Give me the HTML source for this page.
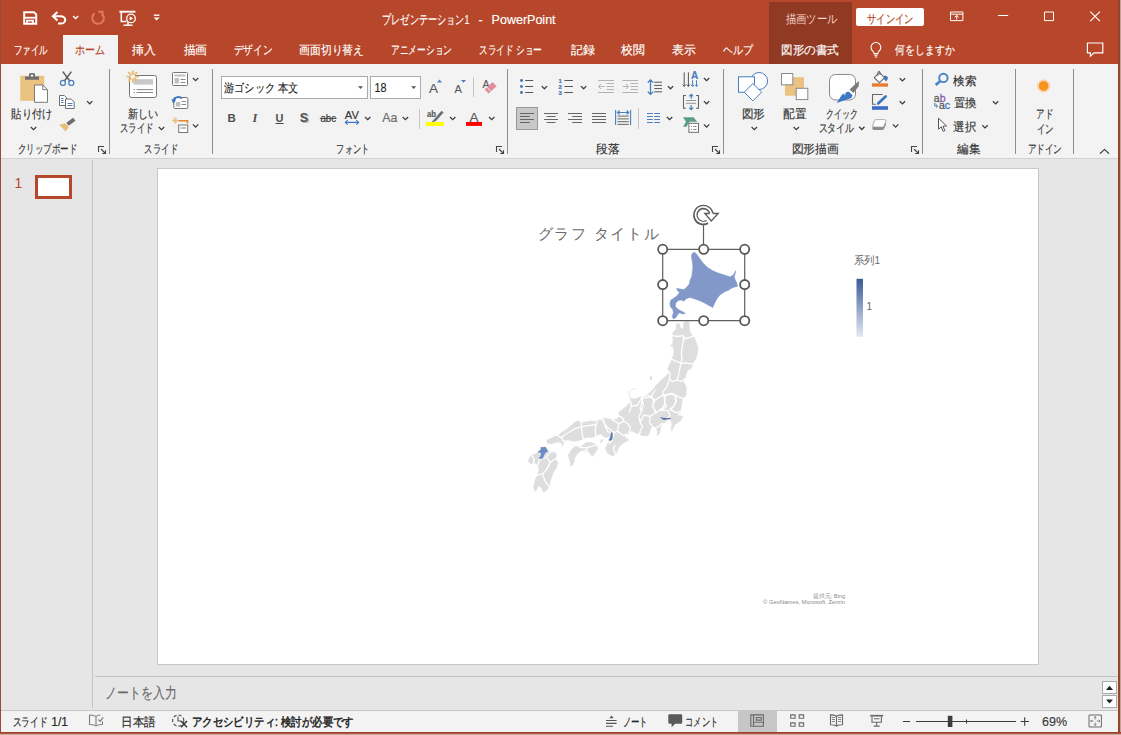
<!DOCTYPE html>
<html lang="ja">
<head>
<meta charset="utf-8">
<title>プレゼンテーション1 - PowerPoint</title>
<style>
html,body{margin:0;padding:0}
body{width:1121px;height:735px;overflow:hidden;position:relative;background:#e6e6e6;font-family:"Liberation Sans",sans-serif;font-size:12px;color:#444}
.a{position:absolute}
#top{left:0;top:0;width:1121px;height:64px;background:#b7472a}
#ctx{left:769px;top:2px;width:83px;height:62px;background:#913a23}
#hometab{left:63px;top:35px;width:55px;height:29px;background:#f3f3f3}
#signin{left:856px;top:8px;width:68px;height:18px;background:#fff;border-radius:2px}
#ribbon{left:0;top:64px;width:1121px;height:94px;background:#f3f3f3;border-bottom:1px solid #d2d2d2}
#leftdiv{left:92px;top:160px;width:1px;height:548px;background:#c3c3c3}
#slide{left:157px;top:168px;width:882px;height:497px;background:#fff;border:1px solid #c8c8c8;box-sizing:border-box}
#notesline{left:95px;top:676px;width:1023px;height:1px;background:#c3c3c3}
#status{left:0;top:710px;width:1121px;height:22px;background:#f3f3f3;border-top:1px solid #c6c6c6;box-sizing:border-box}
#viewsel{left:738px;top:711px;width:39px;height:21px;background:#c6c6c6}
#bl{left:0;top:0;width:1px;height:735px;background:#9a4a38}
#br{left:1118px;top:0;width:2px;height:735px;background:#96432f;border-right:1px solid #c4a39b}
#bb{left:0;top:732px;width:1121px;height:1px;background:#96432f;border-bottom:1px solid #b5553d}
#bb2{left:0;top:734px;width:1121px;height:1px;background:#c9a9a1}
.box{background:#fff;border:1px solid #ababab;box-sizing:border-box}
svg text{font-family:"Liberation Sans",sans-serif;font-size:12px;color:#333;fill:currentColor;stroke:currentColor;stroke-width:.16px}
svg .w{color:#fff;stroke-width:.16px}
svg .o{color:#b7472a;stroke-width:.2px}
svg .k{color:#1e1e1e;stroke-width:.15px}
</style>
</head>
<body>
<div class="a" id="top"></div>
<div class="a" id="ctx"></div>
<div class="a" id="hometab"></div>
<div class="a" id="signin"></div>
<div class="a" id="ribbon"></div>
<div class="a" id="leftdiv"></div>
<div class="a" id="slide"></div>
<div class="a" id="notesline"></div>
<div class="a" id="status"></div>
<div class="a" id="viewsel"></div>
<div class="a box" style="left:221px;top:76px;width:147px;height:23px"></div>
<div class="a box" style="left:370px;top:76px;width:51px;height:23px"></div>
<div class="a" style="left:516px;top:107px;width:22px;height:23px;background:#c8c8c8;border:1px solid #9a9a9a;box-sizing:border-box"></div>
<div class="a box" style="left:1102px;top:681px;width:15px;height:13px;border-color:#ababab"></div>
<div class="a box" style="left:1102px;top:695px;width:15px;height:13px;border-color:#ababab"></div>
<svg class="a" id="ov" width="1121" height="735" viewBox="0 0 1121 735" style="left:0;top:0">
<!-- ===== title bar ===== -->
<g id="qat" fill="none" stroke="#fff" stroke-width="1.400">
<path d="M24.200 12.200h9.800l2.200 2.200v9.400h-12z" stroke-width="2"/><path d="M24.500 17.700h11.400" stroke-width="1.800"/><path d="M27 24v-3.400h6V24" stroke-width="1.700"/>
<path d="M57.400 12l-4.500 4.300 4.500 4.300M53.400 16.300h7.400a4.400 3.600 0 0 1 0 7.200h-2.800" stroke-width="2.100"/>
<path d="M73 16l2.600 2.500 2.600-2.500" stroke-width="1.300"/>
<path d="M94.600 13.400a5.800 5.800 0 1 0 7.200.2M98.300 11.800h4.200v4.400" stroke="#e07a5f" stroke-width="2"/>
<path d="M119.400 11.700h16" stroke-width="1.900"/><path d="M121.300 12v9.600h5.200M128 22v3M123.500 25.300h9" stroke-width="1.500"/>
<circle cx="131" cy="18.400" r="4.300" fill="#b7472a" stroke-width="1.300"/><path d="M129.600 16.200v4.400l3.600-2.200z" fill="#fff" stroke="none"/>
<path d="M153.800 15.200h5.600" stroke-width="1.400"/><path d="M153.600 17.400h6l-3 3.200z" fill="#fff" stroke="none"/>
</g>
<text class="w" x="382" y="24" textLength="87.5" lengthAdjust="spacingAndGlyphs" style="font-size:12.5px">プレゼンテーション1</text>
<text class="w" x="478.6" y="24" style="font-size:12.5px">-</text>
<text class="w" x="491.6" y="24" textLength="64" lengthAdjust="spacingAndGlyphs" style="font-size:12.5px">PowerPoint</text>
<text class="w" x="785.8" y="22.800" textLength="51.6" lengthAdjust="spacingAndGlyphs" style="color:#f6d6cc;stroke-width:0">描画ツール</text>
<text class="o" x="867" y="22.6" textLength="46.4" lengthAdjust="spacingAndGlyphs">サインイン</text>
<g fill="none" stroke="#fff" stroke-width="1">
<path d="M950.5 12h12.4v8.6h-12.4zM950.5 14.2h12.4"/><path d="M956.7 19.4v-3.8M954.7 17.3l2-1.9 2 1.9"/>
<path d="M998 15.5h10.2"/>
<path d="M1044.5 12h9v8.6h-9z"/>
<path d="M1090.3 11.6l9.6 9.6M1099.9 11.6l-9.6 9.6" stroke-width="1.1"/>
<path d="M873 51.3a4.9 4.9 0 1 1 5.8 0c-.7.6-1 1.2-1 2.3h-3.8c0-1.100-.3-1.700-1-2.300zM874.200 55.300h3.400M874.600 57h2.600" stroke-width="1.1"/>
<path d="M1087.400 43h15.400v9.800h-8.800l-3.600 3.400v-3.400h-3z" stroke-width="1.2"/>
</g>
<!-- ===== tabs ===== -->
<g>
<text class="w" x="13.6" y="54.2" textLength="34" lengthAdjust="spacingAndGlyphs">ファイル</text>
<text class="o" x="74.6" y="54.2" textLength="30" lengthAdjust="spacingAndGlyphs">ホーム</text>
<text class="w" x="132.400" y="54.2" textLength="23.6" lengthAdjust="spacingAndGlyphs">挿入</text>
<text class="w" x="183.600" y="54.2" textLength="23.6" lengthAdjust="spacingAndGlyphs">描画</text>
<text class="w" x="233.800" y="54.2" textLength="38.6" lengthAdjust="spacingAndGlyphs">デザイン</text>
<text class="w" x="299" y="54.2" textLength="65" lengthAdjust="spacingAndGlyphs">画面切り替え</text>
<text class="w" x="391" y="54.2" textLength="61" lengthAdjust="spacingAndGlyphs">アニメーション</text>
<text class="w" x="479" y="54.2" textLength="63" lengthAdjust="spacingAndGlyphs">スライド ショー</text>
<text class="w" x="570.5" y="54.2" textLength="24" lengthAdjust="spacingAndGlyphs">記録</text>
<text class="w" x="621" y="54.2" textLength="23.6" lengthAdjust="spacingAndGlyphs">校閲</text>
<text class="w" x="672" y="54.2" textLength="23.6" lengthAdjust="spacingAndGlyphs">表示</text>
<text class="w" x="723" y="54.2" textLength="30" lengthAdjust="spacingAndGlyphs">ヘルプ</text>
<text class="w" x="781" y="54.2" textLength="58" lengthAdjust="spacingAndGlyphs">図形の書式</text>
<text class="w" x="895.4" y="54.2" textLength="59" lengthAdjust="spacingAndGlyphs">何をしますか</text>
</g>
<defs>
<path id="chev" d="M-2.7-1.4L0 1.3 2.7-1.400" fill="none" stroke="#3c3c3c" stroke-width="1.25"/>
<g id="dl" fill="none" stroke="#444" stroke-width="1.100"><path d="M.5 6V.5H6M3 3l4.500 4.500M7.500 4.200v3.300H4.200"/></g>
</defs>
<!-- group separators -->
<g stroke="#8f8f8f" stroke-width="1"><path d="M109.5 69v85M212.500 69v85M507.500 69v85M723.500 69v85M922.500 69v85M1015.500 69v85M1073.500 69v85"/></g>
<g stroke="#c6c6c6" stroke-width="1"><path d="M473.500 77v20M419.500 109v20M638.500 108v21"/></g>
<!-- ===== clipboard ===== -->
<rect x="20.200" y="75.800" width="24" height="25" fill="#eac282"/>
<path d="M25 79.800v-3.200h4v-2a1.500 1.500 0 0 1 1.500-1.500h3a1.500 1.500 0 0 1 1.500 1.500v2h4v3.200z" fill="#6e6e6e"/><rect x="30.800" y="74.600" width="2.400" height="2" fill="#f3f3f3"/>
<path d="M34.500 85h8.300l4.700 4.700v12.600h-13z" fill="#fff" stroke="#7a7a7a" stroke-width="1"/><path d="M42.800 85v4.700h4.700" fill="none" stroke="#7a7a7a"/>
<text x="11.400" y="117.600" textLength="41.200" lengthAdjust="spacingAndGlyphs">貼り付け</text>
<use href="#chev" x="33.500" y="128.400"/>
<g fill="none" stroke="#5c5c5c" stroke-width="1.500"><path d="M62.800 71.600l7.200 9.600M71.400 71.600l-7.200 9.600"/></g>
<g fill="#f3f3f3" stroke="#4a7ebf" stroke-width="1.300"><circle cx="62.900" cy="82.900" r="2.500"/><circle cx="71.300" cy="82.900" r="2.500"/></g>
<g fill="#fff" stroke="#6e6e6e" stroke-width="1"><path d="M59.500 95.500h4.800l2.500 2.500v7.500h-7.300z"/><path d="M65.500 99h5.700l3 3v6.500h-8.700z"/></g>
<g stroke="#4a7ebf" stroke-width="1"><path d="M61 98.500h2.500M61 100.500h2.500M61 102.500h2.500M67.500 103.500h5M67.500 105.500h5"/></g>
<use href="#chev" x="89.700" y="102.500"/>
<path d="M66.300 122.800l6.800-5 2.400 3-6.800 5z" fill="#6e6e6e"/><path d="M65.600 123.200l3.200 4-3.200 4.400-6.400-6.800z" fill="#e8be76"/>
<text x="18" y="153" textLength="59" lengthAdjust="spacingAndGlyphs">クリップボード</text>
<use href="#dl" x="98" y="146"/>
<!-- ===== slides ===== -->
<rect x="129.500" y="75.500" width="27" height="22" rx="2" fill="#fff" stroke="#767676"/>
<rect x="133.600" y="79.200" width="19.400" height="5.400" fill="#c8c8c8"/>
<g stroke="#8a8a8a" stroke-width="1"><path d="M133.500 89.600h1.500M136.500 89.600h16.500M133.500 92.500h1.500M136.500 92.500h16.500"/></g>
<g stroke="#e8be76" stroke-width="1.900"><path d="M132.800 70.400v12.400M126.600 76.600h12.400M128.400 72.200l8.800 8.800M137.200 72.200l-8.800 8.800"/></g><circle cx="132.800" cy="76.600" r="2.200" fill="#f3f3f3"/>
<text x="128.200" y="117.600" textLength="30.400" lengthAdjust="spacingAndGlyphs">新しい</text>
<text x="119.800" y="132.400" textLength="34" lengthAdjust="spacingAndGlyphs">スライド</text>
<use href="#chev" x="161.500" y="128.400"/>
<rect x="172.500" y="72.500" width="15" height="13" rx="1" fill="#fff" stroke="#767676"/>
<rect x="174.500" y="74.500" width="11" height="2" fill="#c0c0c0"/><rect x="174.500" y="78" width="4.500" height="5.500" fill="#c0c0c0"/>
<g stroke="#8a8a8a"><path d="M180.500 79.500h5M180.500 82.500h5"/></g>
<use href="#chev" x="195.600" y="79.400"/>
<rect x="173.800" y="97.500" width="14" height="11" rx="1" fill="#fff" stroke="#767676"/>
<rect x="175.800" y="102" width="4.500" height="4.500" fill="#c0c0c0"/><g stroke="#8a8a8a"><path d="M181.500 101.500h4.500M181.500 104.500h4.500"/></g>
<path d="M173.500 102.500a5 5 0 0 1 8.500-4" fill="none" stroke="#3e78c2" stroke-width="1.800"/><path d="M171.200 99.500l5 0-2.600 4z" fill="#3e78c2"/>
<g stroke="#e8be76" stroke-width="1"><path d="M175.300 117.300v6.400M172.100 120.500h6.400M173 118.200l4.600 4.600M177.600 118.200l-4.600 4.600"/></g>
<path d="M178.500 120.800h9v2.800" fill="none" stroke="#e08a2e" stroke-width="1.600"/>
<rect x="178.700" y="125" width="9" height="7.500" fill="#fff" stroke="#767676"/><rect x="180.500" y="127" width="5.500" height="2" fill="#c0c0c0"/>
<use href="#chev" x="195.600" y="125.800"/>
<text x="144.400" y="153" textLength="33.600" lengthAdjust="spacingAndGlyphs">スライド</text>
<!-- ===== font ===== -->
<text class="k" x="224" y="92" textLength="74" lengthAdjust="spacingAndGlyphs">游ゴシック 本文</text>
<path d="M358 86.200h5l-2.500 2.800z" fill="#555"/>
<text class="k" x="374.400" y="92.200" textLength="12" lengthAdjust="spacingAndGlyphs" style="font-size:12.500px">18</text>
<path d="M411.200 86.200h5l-2.500 2.800z" fill="#555"/>
<text x="227.400" y="121.800" style="font-weight:bold;font-size:11.500px;color:#505050;stroke-width:0">B</text>
<text x="252.600" y="121.800" style="font-family:'Liberation Serif',serif;font-style:italic;font-weight:bold;font-size:12.500px;color:#505050;stroke-width:0">I</text>
<text x="275.600" y="121.600" style="font-weight:bold;font-size:11px;color:#505050;stroke-width:0">U</text><path d="M275.600 123.500h8" stroke="#444" stroke-width="1"/>
<text x="301.200" y="123.400" style="font-weight:bold;font-size:12.500px;color:#b4b4b4;stroke-width:0">S</text><text x="299.800" y="122" style="font-weight:bold;font-size:12.500px;color:#505050;stroke-width:0">S</text>
<text x="320.400" y="121.600" textLength="15.600" lengthAdjust="spacingAndGlyphs" style="font-size:10px">abc</text><path d="M319.800 118.400h16.800" stroke="#444" stroke-width="1"/>
<text x="344.800" y="118.800" textLength="14" lengthAdjust="spacingAndGlyphs" style="font-size:10px">AV</text>
<path d="M345.500 122.400h13M347.700 120.200l-2.400 2.200 2.400 2.200M356.300 120.200l2.400 2.200-2.400 2.200" fill="none" stroke="#3e78c2" stroke-width="1.100"/>
<use href="#chev" x="367.700" y="118.400"/>
<text x="382.300" y="121.800" textLength="15" lengthAdjust="spacingAndGlyphs" style="font-size:12.500px;color:#6a6a6a">Aa</text>
<use href="#chev" x="405.400" y="118.400"/>
<text x="429" y="92.700" style="font-size:13.500px;color:#5a5a5a">A</text><path d="M437 82.400h5l-2.500-2.800z" fill="#4a7ebf"/>
<text x="454.400" y="92.700" style="font-size:11px;color:#5a5a5a">A</text><path d="M461 80h5l-2.500 2.800z" fill="#4a7ebf"/>
<text x="482.600" y="87.700" style="font-size:10.500px;color:#5a5a5a">A</text>
<path d="M484.600 89.400l8-7.400 4 4.200-8 7.400z" fill="#e38a9b"/><path d="M487 87.200l4 4.200" stroke="#f3f3f3" stroke-width="1"/>
<text x="427" y="116.800" textLength="9" lengthAdjust="spacingAndGlyphs" style="font-size:9.500px;font-weight:bold;color:#5a5a5a">ab</text>
<path d="M441.500 111.200l1.700 1.300-7.300 8.200-3.600 1z" fill="#6e6e6e" stroke="#6e6e6e" stroke-width=".8"/>
<rect x="425.800" y="122" width="18" height="3.900" fill="#ffff00"/>
<use href="#chev" x="452.700" y="118.400"/>
<text x="469.400" y="121.600" style="font-size:13.500px;color:#5a5a5a">A</text><rect x="466" y="122" width="16" height="3.900" fill="#ff0000"/>
<use href="#chev" x="491.700" y="118.400"/>
<text x="336.400" y="153" textLength="32.600" lengthAdjust="spacingAndGlyphs">フォント</text>
<use href="#dl" x="496" y="146"/>
<!-- ===== paragraph ===== -->
<g fill="#3e6fb0"><circle cx="521.500" cy="80.500" r="1.400"/><circle cx="521.500" cy="86.500" r="1.400"/><circle cx="521.500" cy="92.500" r="1.400"/></g>
<g stroke="#555" stroke-width="1"><path d="M525.200 80.500h8M525.200 86.500h8M525.200 92.500h8M564.400 80.500h8.500M564.400 86.500h8.500M564.400 92.500h8.500"/></g>
<use href="#chev" x="544.400" y="87.500"/>
<g style="font-size:5.500px;font-weight:bold" fill="#3e6fb0"><text x="558.600" y="82.600" style="font-size:6px;color:#3e6fb0">1</text><text x="558.600" y="88.600" style="font-size:6px;color:#3e6fb0">2</text><text x="558.600" y="94.600" style="font-size:6px;color:#3e6fb0">3</text></g>
<use href="#chev" x="583.600" y="87.500"/>
<g stroke="#b4b4b4" stroke-width="1" fill="none"><path d="M598 80.500h16M598 92.500h16M606.500 83.500h7.500M606.500 86.500h7.500M606.500 89.500h7.500M598.500 86.500h6M601 84l-2.600 2.500 2.600 2.500"/>
<path d="M622.300 80.500h16M622.300 92.500h16M630.500 83.500h7.500M630.500 86.500h7.500M630.500 89.500h7.500M622.500 86.500h6M626 84l2.600 2.500-2.600 2.500"/></g>
<g stroke="#666" stroke-width="1"><path d="M520 113.500h14M520 116.500h9.800M520 119.500h14M520 122.500h9.800"/>
<path d="M544 113.500h14M546.500 116.500h9M544 119.500h14M546.500 122.500h9"/>
<path d="M568 113.500h14M572.200 116.500h9.800M568 119.500h14M572.200 122.500h9.800"/>
<path d="M592 113.500h14M592 116.500h14M592 119.500h14M592 122.500h14"/>
<path d="M617.500 116.100h11.300M617.500 118.900h11.300M617.500 121.700h11.300M617.500 124.400h11.300"/></g>
<g stroke="#4a7ebf" stroke-width="1.100" fill="none"><path d="M615.600 110v15M630.600 110v15M617.500 112.500h11.300M619.600 110.500l-2.200 2 2.200 2M626.600 110.500l2.200 2-2.200 2"/></g>
<g stroke="#4a7ebf" stroke-width="1.300" fill="none"><path d="M650.500 79.800v14.600M647.800 82.500l2.700-2.700 2.700 2.700M647.800 91.700l2.700 2.700 2.700-2.700"/></g>
<g stroke="#555" stroke-width="1"><path d="M654.200 82.200h7.800M654.200 85.400h7.800M654.200 88.600h7.800M654.200 91.800h7.800"/></g>
<use href="#chev" x="670.500" y="87.500"/>
<g stroke="#4a7ebf" stroke-width="1.100"><path d="M647 113.500h5.800M647 116.500h5.800M647 119.500h5.800M647 122.500h5.800M654.200 113.500h5.800M654.200 116.500h5.800M654.200 119.500h5.800M654.200 122.500h5.800"/></g>
<use href="#chev" x="669.600" y="118.400"/>
<g stroke="#555" stroke-width="1" fill="none"><path d="M684.200 72.400v14M688.400 72.400v14M682.600 84.600l1.600 1.800 1.600-1.800M686.800 84.600l1.600 1.800 1.600-1.800"/></g>
<text x="691" y="78.800" style="font-size:10px;font-weight:bold;color:#4a7ebf">A</text>
<g stroke="#4a7ebf" stroke-width="1" fill="none"><path d="M692.600 80.200v6.200M696.500 80.200v6.200M691.200 84.800l1.400 1.600 1.400-1.600M695.100 84.800l1.400 1.600 1.400-1.600"/></g>
<use href="#chev" x="706.600" y="79.400"/>
<g stroke="#666" stroke-width="1.100" fill="none"><path d="M686 95.500h-2.500v12.800h2.500M696 95.500h2.500v12.800h-2.500"/><path d="M686 100.500h10M686 103.300h10" stroke="#8a8a8a" stroke-width=".9"/></g>
<g stroke="#4a7ebf" stroke-width="1.200" fill="none"><path d="M691.200 98.800v-4.200M689.200 96.400l2-2 2 2M691.200 105v4.400M689.200 107.600l2 2 2-2"/></g>
<use href="#chev" x="706.600" y="102.500"/>
<path d="M683 117.200h10.500l3.700 4.500h-7.700l-3 5h-3.500l3-5z" fill="#5b9e85"/>
<rect x="688.900" y="123.300" width="9.600" height="9" fill="#fff" stroke="#6e6e6e"/><path d="M691 126.500h1M693.200 126.500h3.300M691 129.500h1M693.200 129.500h3.300" stroke="#8a8a8a"/>
<use href="#chev" x="706.600" y="125.800"/>
<text x="596.400" y="153" textLength="23.600" lengthAdjust="spacingAndGlyphs">段落</text>
<use href="#dl" x="712" y="146"/>
<!-- ===== drawing ===== -->
<g fill="#fff" stroke="#4a7ebf" stroke-width="1"><circle cx="759.100" cy="81" r="8.500"/><rect x="738.500" y="76.800" width="16" height="15.500"/><path d="M752.900 83.500l8.700 8.700-8.700 8.700-8.700-8.700z"/></g>
<text x="741.600" y="117.600" textLength="23.200" lengthAdjust="spacingAndGlyphs">図形</text>
<use href="#chev" x="754.300" y="128.400"/>
<rect x="785" y="77.200" width="19" height="18.500" fill="#eac282"/>
<g fill="#fff" stroke="#8a8a8a" stroke-width="1"><rect x="781.500" y="73.500" width="11.300" height="11.300"/><rect x="796.200" y="88.300" width="11.600" height="11.300"/></g>
<text x="783.200" y="117.600" textLength="23.400" lengthAdjust="spacingAndGlyphs">配置</text>
<use href="#chev" x="796.300" y="128.400"/>
<rect x="829.500" y="74.500" width="26" height="25.500" rx="6" fill="#fff" stroke="#8a8a8a"/>
<path d="M849.500 89.500l4 3.500 5.300-7v-5z" fill="#7a7a7a"/><path d="M848 91l4.500 4-1 3-14.800 5 5-8z" fill="#3e78c2"/><path d="M850.800 92.200a3.500 3.500 0 0 0-6 3" fill="none" stroke="#fff" stroke-width="1"/>
<text x="826" y="117.600" textLength="31.800" lengthAdjust="spacingAndGlyphs">クイック</text>
<text x="818.500" y="132.400" textLength="35.600" lengthAdjust="spacingAndGlyphs">スタイル</text>
<use href="#chev" x="861.800" y="128.200"/>
<path d="M884 76c2.600-.6 4 .4 3.800 2.200-.2 1.400-.9 2.300-1.600 3.200l-2.800-3z" fill="#3b78c0"/>
<path d="M879.400 72.600l5.100 5.100-5.100 5.100-5.100-5.100z" fill="#fff" stroke="#666" stroke-width="1.100"/><path d="M877.900 76v-3.600a1.100 1.100 0 0 1 2.200 0v2.600" fill="none" stroke="#666" stroke-width="1"/>
<rect x="872" y="83.300" width="16" height="3.400" fill="#e97c30"/>
<use href="#chev" x="902.400" y="79.600"/>
<path d="M882.600 94.500h-10.100v9.700h3.300" fill="none" stroke="#666" stroke-width="1.100"/><path d="M885.600 96.400l-7.200 6.800" stroke="#3b78c0" stroke-width="2.800" stroke-linecap="round"/><path d="M878.600 101.800l-2 3 3.400-1.200z" fill="#3b78c0"/>
<rect x="872" y="106.200" width="16" height="3.600" fill="#3d6cc7"/>
<use href="#chev" x="902.400" y="102.600"/>
<path d="M875.600 122.300h8.600a1.800 1.800 0 0 1 1.700 2.400l-1.900 4.300a1.800 1.800 0 0 1-1.700 1.100h-8.200a1.800 1.800 0 0 1-1.700-2.400l1.600-4.300a1.800 1.800 0 0 1 1.600-1.100z" fill="#8c8c8c"/>
<path d="M876 119.600h8.400a1.500 1.500 0 0 1 1.400 2l-1.900 4.600a1.500 1.500 0 0 1-1.400.9h-8.300a1.500 1.500 0 0 1-1.400-2l1.800-4.600a1.500 1.500 0 0 1 1.400-.9z" fill="#fff" stroke="#9a9a9a" stroke-width=".8"/>
<use href="#chev" x="895.600" y="125.800"/>
<text x="791.600" y="153" textLength="47.400" lengthAdjust="spacingAndGlyphs">図形描画</text>
<use href="#dl" x="911" y="146"/>
<!-- ===== editing ===== -->
<circle cx="943.400" cy="77.900" r="4.200" fill="none" stroke="#4682c8" stroke-width="1.900"/><path d="M940.300 81l-4.600 4" stroke="#4682c8" stroke-width="2.500"/>
<text x="953.400" y="84.800" textLength="23.200" lengthAdjust="spacingAndGlyphs">検索</text>
<text x="933.800" y="101.800" style="font-size:10.500px;color:#5a5a5a;stroke-width:.3px">a<tspan style="color:#8e5bb0">b</tspan></text>
<text x="939" y="108.800" style="font-size:10.500px;color:#5a5a5a;stroke-width:.3px">a<tspan style="color:#3e78c2">c</tspan></text>
<path d="M934.800 103v3h2.600M936 104.600l1.600 1.500-1.600 1.500" fill="none" stroke="#3e78c2" stroke-width="1"/>
<text x="953.600" y="107.400" textLength="23" lengthAdjust="spacingAndGlyphs">置換</text>
<use href="#chev" x="995.600" y="102.600"/>
<path d="M938.500 118.200v11l2.700-2.400 2 4.600 1.700-.8-2-4.400 3.600-.2z" fill="#fff" stroke="#555" stroke-width="1"/>
<text x="953.400" y="130.800" textLength="23" lengthAdjust="spacingAndGlyphs">選択</text>
<use href="#chev" x="985" y="126.600"/>
<text x="957.300" y="153" textLength="23.200" lengthAdjust="spacingAndGlyphs">編集</text>
<!-- ===== add-ins ===== -->
<circle cx="1043.600" cy="86" r="5" fill="#f7941d"/><circle cx="1043.600" cy="86" r="6" fill="none" stroke="#fbc98a" stroke-width="1"/>
<text x="1036" y="118" textLength="17" lengthAdjust="spacingAndGlyphs">アド</text>
<text x="1036.800" y="133" textLength="16.800" lengthAdjust="spacingAndGlyphs">イン</text>
<text x="1027.500" y="153" textLength="34.400" lengthAdjust="spacingAndGlyphs">アドイン</text>
<path d="M1100 153.700l4.500-4.300 4.500 4.300" fill="none" stroke="#2a2a2a" stroke-width="1.100"/>
<!--RIBBON-END-->
<!-- ===== slide content ===== -->
<g id="map">
<path d="M676.6 324 679.5 323.8 680.1 328.1 682.6 329 683.6 326.9 683.6 322.5 686.4 321.5 689.2 321.9 689.2 326.9 690.4 332.5 692.4 336 694.2 337.5 696.4 342.5 697.9 348.2 697.4 353.8 695.8 358.8 693.3 361.9 692.4 363.8 692 367 690.4 369.1 687.7 369.8 686.4 373.2 684.9 378.2 683.3 382 684.9 383.9 686.2 387.6 686.2 392 686.2 395 682.6 398.8 681.6 403.8 680.8 408.8 680.1 411.9 677 415 680.1 415.7 682.6 416.5 681.1 420.1 677.6 422.8 674.9 424.4 673.3 427.6 671.6 431.3 671.1 428.2 672 425.1 671.4 421.9 670.4 419.4 667.6 419.1 666.1 421.3 664.5 422.8 662 423.6 660.4 427.6 659.9 432.6 658.2 435.3 657 435.1 657.4 431.3 656.1 427.6 653.2 426.1 650.7 428.2 649.5 432.6 648.2 435.3 645.1 435.7 641.3 435.3 639.8 434.5 641.9 431.9 640.1 431.3 637.6 433.6 633.8 431.9 631.3 430.7 629.1 433.2 626.9 434.1 625 433.2 623.8 435.7 626.3 438.2 628.8 440.1 625 442 621.3 444.5 618.8 447.6 616.9 451.4 615.7 454.5 612.5 455.7 609.9 454.8 607.4 452.6 605.8 449.5 606.2 446.3 607.7 443.2 610.2 441.3 608.9 436.3 607.7 437.3 605.2 437.6 602.7 435.7 600.8 433.8 598.9 434.4 595.2 436.6 591.4 437.6 587.7 437.3 583.9 438.2 580.1 440.1 576.4 441.3 572.6 441.1 568.2 439.8 564.5 440.7 563.6 443.2 562.6 445.7 562 443.8 560.1 442.3 557 441.9 553.8 443.2 550.1 443.8 547.3 443.2 547 440.3 549.5 439.1 552.6 437.6 555.7 436.1 558.6 436.3 559.9 433.8 562.6 431.9 566.4 429.4 570.1 426.5 572.6 424.4 575.1 421.9 578.3 420.7 581.4 423.2 583.9 422.3 587.7 421.5 591.4 421 595.2 421.5 597.7 419.4 600.1 420.7 602.5 419.4 605 418.2 608.8 419.1 612.5 420.1 616.3 419.4 619.4 416.3 618.8 412.5 621.9 410 625 407.5 628.5 404.4 630.1 401.3 630.4 398.5 632.4 398.9 635.9 398.8 638.6 397.8 639.9 396.9 642 397.4 643.3 396.1 646.7 394.7 650.8 392 654.2 387.9 657.6 383.8 661.7 379.8 667.1 375 669.5 372 667.6 369.5 669.5 364.5 671.6 360.1 672.6 357.6 674.1 352.6 673.3 346.9 670.1 345.7 672.4 344.4 673.3 340 672.4 335.7 673.3 331.9 676.1 328.8z M568.2 455.1 571.4 450.1 575.1 446.3 580.1 447.6 586.4 442.6 591.4 442.6 596.4 445.1 597.7 448.8 595.2 452.6 592.7 456.3 590.2 455.1 586.4 451.3 581.4 451.6 577.6 455.1 575.1 458.9 572.6 465.1 570.7 466.4 570.1 461.4z M531.3 455.1 536.3 453.8 537.6 452 540.7 449.5 540.7 447.3 545.7 447 547 449.5 550.1 452.6 555.1 452.6 556.6 455.1 555.1 458.9 557.9 462.6 556.6 467.6 553.2 472.6 550.7 480.1 549.1 486.4 546.6 490.4 543.2 492 541.6 487.7 538.2 485.8 535.7 491.4 533.6 488.3 535.1 480.1 537.6 475.1 539.1 470.1 537.6 465.1 533.8 462.6 530.7 464.1 528.5 461.4 529.4 457.6z M650.6 376.3 652.1 377.1 651.3 380.4 650 378.9z M600.9 440.3 602.7 439.1 602.2 441.8 600.4 442.8z" fill="#dedede" stroke="#dedede" stroke-width=".6" stroke-linejoin="round"/>
<path d="M672.4 335.7 677.6 336.5 683.3 335.7 685.1 338.8 692.7 336.3 M683.9 336.3 682.6 345 681.4 352.6 682 358.8 680.8 363.2 M672 359.4 676.4 361.3 680.8 363.2 686.4 363.2 692 363.8 M680.8 363.2 679.5 370.1 678.3 376.3 677 380.1 M667.6 370.1 670.1 372.6 669.5 378.9 672.6 381.4 677 380.1 681.4 381.4 684.5 378.9 M669.5 378.9 666.4 387.6 663.2 391.4 662.6 395.1 M662.6 395.1 667.6 394.5 672 393.3 675.1 395.1 680.1 397.6 682.6 398.3 M675.1 395.1 675.8 401.4 673.9 406.4 670.1 410.2 M665.1 395.1 664.5 401.4 666.4 406.4 661.4 410.2 M642.6 398.3 646.3 397.6 651.3 397 655.1 400.1 660.1 397 662.6 395.1 M655.1 400.1 652.6 405.1 655.1 412 M642.6 398.3 641.9 402.6 640.1 407.7 641.3 412 M630.7 401.4 631.3 406.4 629.4 412 M630.1 401.3 631.3 406.3 637.6 405 641.9 397.5 641.3 390 M641.9 397.5 643.2 405 641.3 412.5 638.8 416.3 640.1 422.6 642.6 426.3 640.1 431.3 M651.3 396.9 653.8 401.3 652.6 406.3 656.3 412.5 660.1 410 663.9 406.3 665.1 401.3 663.9 396.3 670.1 393.8 675.1 395 676.4 401.3 673.9 406.3 670.1 408.8 675.1 412.5 680.1 411.9 M656.3 412.5 650.1 416.3 649.5 422.6 652.6 426.3 M660.1 410 667.6 410.7 670.1 415 667.6 419.1 M650.1 416.3 643.8 415 640.1 422.6 M629.1 433.2 630.1 427.6 628.2 423.8 623.8 421.3 622.5 417.5 619.4 416.3 M623.8 421.3 618.8 423.8 615 421.3 612.5 420.1 M618.8 423.8 617.5 431.3 623.8 435.7 M617.5 431.3 613.8 432.6 612.5 440.1 609.4 443.2 M613.8 432.6 607.5 427.6 603.8 422.6 602.5 419.4 M615 445.1 613.5 448.9 615.7 454.5 M655.1 390 651.3 396.9 647.6 395 643.2 396.3 641.9 397.5 M662 423.6 658.9 426.3 656.1 427.6 M558.6 436.3 561.4 437.6 563.2 441.3 564.5 440.7 M561.4 437.6 566.4 433.8 571.4 430.7 576.4 428.2 581.4 426.9 581.4 423.2 M581.4 426.9 582 432.6 583.3 438.2 M581.4 426.9 587.7 425.7 593.9 425 596.4 423.8 597.7 419.4 M596.4 423.8 595.2 430.1 595.8 436.3 M603.9 420.7 605.2 426.3 607.7 431.3 610.2 432.8 M580.1 447.6 587.7 447.3 596.4 445.1 M575.1 458.9 577.6 455.1 581.4 451.6 586.4 450.1 590.2 455.1 M586.4 450.1 587.7 447.3 M540.1 458.9 545.1 457.9 550.1 452.6 M547.6 458.2 550.1 462.6 555.1 458.9 M537.6 475.1 542.6 473.9 546.3 470.1 550.1 462.6 M542.6 473.9 545.1 481.4 549.1 486.4 M531.3 455.1 534.1 458.9 533.8 462.6 M537.6 465.1 540.1 458.9" fill="none" stroke="#fff" stroke-width="1.300" stroke-linejoin="round" stroke-linecap="round"/>
<path id="noto" d="M630.4 398.1 629.4 395.4 628.7 392 630.4 390.3 633.5 388.9 636.2 388.3" fill="none" stroke="#e2e2e2" stroke-width=".9"/>
<path d="M540.7 447.3 545.7 447 547 449.5 548.2 451.3 545.7 452.6 543.8 455.7 543.2 458.2 540.1 458.9 538.8 458.2 540.7 455.7 541.3 453.2 537.6 452 539.4 450.7 540.7 449.5z" fill="#6e8cc4"/><path d="M660.1 416.9 662.6 417.8 667.6 418.2 670.7 417.8 670.4 419.1 667.6 419.6 663.9 419.8 662 419.1z" fill="#4e68a8"/><path d="M611 432.6 612.5 432.6 612.8 436.3 612.3 439.5 610.6 440.7 608.1 440.3 610 438.2 610.6 435.7z" fill="#5c7bb8"/>
<path d="M694.2 252 696.6 254.1 699.7 258.4 703.3 263.3 707.6 267.5 712.5 270.6 717.4 272.8 722.3 274.3 726.6 275.7 730.3 276.7 733.3 274.9 735.8 270.6 735.2 273.7 734.3 276.7 735.2 279.8 736.8 282.8 737.6 286.3 734.6 287.1 731.5 288.3 728.4 290.2 724.2 292 720.5 294.5 717.4 298.1 715 302.4 712.8 307.6 708.9 305.5 704 302.7 699.1 300.6 694.2 298.8 689.9 297.5 686.2 298.8 683.8 301.2 681.3 300 678.3 300.6 675.8 303 675.2 306.1 677 308.5 680.1 310.4 683.8 312.2 685.4 313.4 682.5 314.1 679.5 312.8 677.6 314.7 675.8 317.7 673.4 318.9 672.1 316.5 673.4 312.8 672.7 309.2 670.3 306.7 669.9 303 670.9 300 674 298.1 677 295.7 679.5 292.6 677 290.2 676.8 288.3 680.1 289 683.8 289.6 686.8 287.1 689.3 284.1 689.9 280.4 691.7 276.7 692.3 271.8 692.9 266.9 692.3 262 691.5 257.1 691.7 254.1z" fill="#8298c8" stroke="#8298c8" stroke-width=".5" stroke-linejoin="round"/>
</g>
<text x="537.500" y="238.800" textLength="121.500" lengthAdjust="spacing" style="font-size:15px;color:#6a6a6a;stroke-width:0">グラフ タイトル</text>
<g fill="none" stroke="#606060" stroke-width="1.200"><path d="M662.700 249.300h82v71.400h-82zM703.500 249.300v-24"/></g>
<g fill="#fff" stroke="#585858" stroke-width="1.800"><circle cx="662.700" cy="249.300" r="4.600"/><circle cx="703.700" cy="249.300" r="4.600"/><circle cx="744.700" cy="249.300" r="4.600"/><circle cx="662.700" cy="284.600" r="4.600"/><circle cx="744.700" cy="284.600" r="4.600"/><circle cx="662.700" cy="320.700" r="4.600"/><circle cx="703.700" cy="320.700" r="4.600"/><circle cx="744.700" cy="320.700" r="4.600"/></g>
<g fill="none" stroke="#5a5a5a"><path d="M707.400 222.100A8 8 0 1 1 711.400 214.500" stroke-width="4.600"/><path d="M704.800 213.500h13.400l-6.900 7.500z" fill="#fff" stroke-width="1.300"/><path d="M707.200 221.700A7.900 7.900 0 1 1 711.300 214.800" stroke="#fff" stroke-width="1.700"/><path d="M709.500 214.200h3.600" stroke="#fff" stroke-width="1.500"/></g>
<text x="853.500" y="264" textLength="26.500" lengthAdjust="spacingAndGlyphs" style="font-size:10.500px;color:#666;stroke-width:0">系列1</text>
<defs><linearGradient id="lg" x1="0" y1="0" x2="0" y2="1"><stop offset="0" stop-color="#3b5998"/><stop offset="1" stop-color="#e4eaf5"/></linearGradient></defs>
<rect x="856.500" y="278.800" width="6.500" height="58" fill="url(#lg)"/>
<text x="866.600" y="310" style="font-size:10px;color:#666;stroke-width:0">1</text>
<text x="845" y="598.400" text-anchor="end" style="font-size:5.500px;color:#8a8a8a;stroke-width:0">提供元: Bing</text>
<text x="845" y="603.800" text-anchor="end" textLength="82" lengthAdjust="spacingAndGlyphs" style="font-size:5.500px;color:#8a8a8a;stroke-width:0">© GeoNames, Microsoft, Zenrin</text>
<!-- thumbnail / notes -->
<text x="14.600" y="188.200" style="font-size:14px;color:#b7472a;stroke-width:0">1</text>
<rect x="36.500" y="176.500" width="34" height="21" fill="#fff" stroke="#b7472a" stroke-width="3"/>
<text x="105.400" y="698" textLength="71.400" lengthAdjust="spacingAndGlyphs" style="font-size:14.500px;color:#6a6a6a">ノートを入力</text>
<path d="M1106 690h7l-3.500-4.200z" fill="#222"/><path d="M1106 699.400h7l-3.500 4.200z" fill="#222"/>
<!--SLIDE-END-->
<!-- ===== status bar ===== -->
<text x="12.500" y="725.800" style="color:#262626"><tspan textLength="35" lengthAdjust="spacingAndGlyphs">スライド</tspan> <tspan x="51.200" textLength="16.800" lengthAdjust="spacingAndGlyphs" style="font-size:12.500px">1/1</tspan></text>
<g fill="none" stroke="#777" stroke-width="1"><path d="M96 716.500v9.500M96 716.500c-1.500-1-4-1.500-6.500-1.500v9.500c2.500 0 5 .5 6.500 1.500M96 716.500c1.500-1 3-1.500 4.500-1.500M96 726c1.500-1 4-1.500 6.500-1.500v-3"/><path d="M98.500 719.500l1.700 1.800 3-4" stroke-width="1.100"/></g>
<text x="121.200" y="725.800" textLength="34.400" lengthAdjust="spacingAndGlyphs" style="color:#262626">日本語</text>
<circle cx="178.200" cy="720.600" r="5.600" fill="none" stroke="#555" stroke-width="1.200" stroke-dasharray="3.200 2"/>
<path d="M178 716.500v4.500h3" fill="none" stroke="#555" stroke-width="1.100"/>
<path d="M181 721l6 6.200M187 721l-6 6.200" stroke="#3c3c3c" stroke-width="1.600"/>
<text x="191.800" y="725.800" textLength="162" lengthAdjust="spacingAndGlyphs" style="color:#262626;stroke-width:.5px">アクセシビリティ: 検討が必要です</text>
<g stroke="#555" stroke-width="1.100"><path d="M606 720.500h10.600M606 723.400h10.600M606 726.300h7"/></g><path d="M609.300 718.200h4.400l-2.200-2.800z" fill="#555"/>
<text x="622.500" y="725.800" textLength="25.400" lengthAdjust="spacingAndGlyphs" style="color:#262626">ノート</text>
<path d="M669.500 714.300h11.500a1.200 1.200 0 0 1 1.200 1.200v7a1.200 1.200 0 0 1-1.200 1.200h-5.800l-3.600 3.600v-3.600h-2.100a1.200 1.200 0 0 1-1.200-1.200v-7a1.200 1.200 0 0 1 1.200-1.200z" fill="#5a5a5a"/>
<text x="685" y="725.800" textLength="33" lengthAdjust="spacingAndGlyphs" style="color:#262626">コメント</text>
<g fill="none" stroke="#6a6a6a" stroke-width="1.100"><path d="M750.800 714.900h12.600v11.400h-12.600zM753.500 715v11.200M753.500 722.300h9.800M756.300 717.500h5v2.600h-5z"/>
<path d="M790.700 714.900h4.400v3.400h-4.400zM799.200 714.900h4.400v3.400h-4.400zM790.700 722.900h4.400v3.400h-4.400zM799.200 722.900h4.400v3.400h-4.400z"/>
<path d="M836.500 716.200v10.500M836.500 716.200c-1.500-1-3.500-1.300-6-1.300v9.800c2.500 0 4.500.3 6 1.300M836.500 716.200c1.500-1 3.500-1.300 6-1.300v9.800c-2.500 0-4.500.3-6 1.300"/>
<path d="M831.800 717.500h3.200M831.800 719.500h3.200M831.800 721.500h3.200M838 717.500h3.200M838 719.500h3.200M838 721.500h3.200" stroke-width=".8"/>
<path d="M870.200 715.700h13" stroke-width="1.700"/><path d="M872 716.500v5.800h9.400v-5.800M874 718.800h5.400M876.700 722.300v3.600M873.700 726.100h6"/></g>
<g stroke="#3c3c3c" stroke-width="1.100"><path d="M903 721.500h7M916 721.500h100M966.500 719.500v4M1020.500 721.500h8.500M1024.700 717.300v8.400"/></g>
<rect x="947.800" y="715.800" width="4.600" height="11.200" fill="#3c3c3c"/>
<text x="1042" y="725.800" textLength="25" lengthAdjust="spacingAndGlyphs" style="font-size:12.500px;color:#3c3c3c">69%</text>
<g fill="none" stroke="#6a6a6a" stroke-width="1"><path d="M1089 715h12.400v12h-12.400z"/><path d="M1095.200 716.500v3M1095.200 725.500v-3M1090.500 721h3M1099.900 721h-3M1094 717.700l1.200-1.200 1.200 1.200M1094 724.300l1.200 1.200 1.200-1.200M1091.700 719.800l-1.200 1.200 1.200 1.200M1098.700 719.800l1.200 1.200-1.200 1.200" stroke-width=".8"/></g>
<!--STATUS-END-->
</svg>

<div class="a" id="bl"></div>
<div class="a" id="br"></div>
<div class="a" id="bb"></div>
<div class="a" id="bb2"></div>
</body>
</html>
